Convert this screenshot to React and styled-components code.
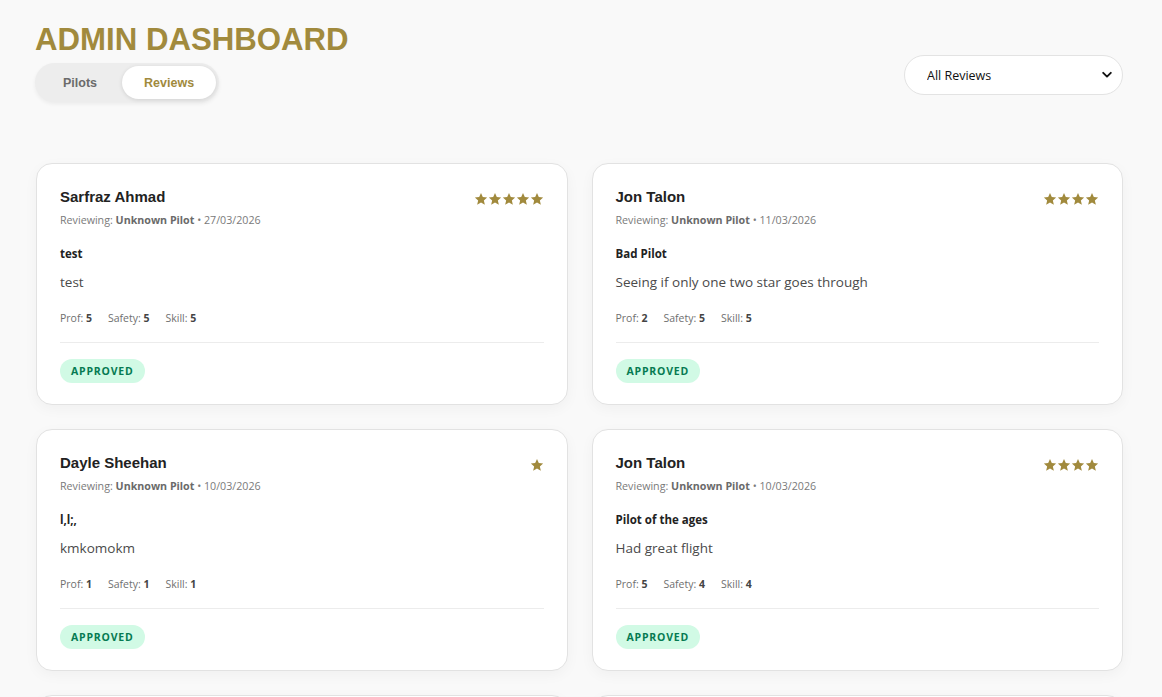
import React from "react";
import styled, { createGlobalStyle } from "styled-components";

const Global = createGlobalStyle`
  html, body { margin: 0; padding: 0; background: #f9f9f9; }
  body { font-family: "Open Sans", "Noto Sans", sans-serif; color: #222; }
  * { box-sizing: border-box; }
`;

const GOLD = "#a18a3d";

const Page = styled.div`
  padding: 22px 39px 40px 36px;
`;

const Header = styled.header`
  display: flex;
  justify-content: space-between;
  align-items: flex-start;
`;

const HeaderLeft = styled.div`
  display: flex;
  flex-direction: column;
  gap: 5px;
  margin-left: -1px;
`;

const Title = styled.h1`
  margin: 0;
  font-family: "Liberation Sans", Arial, sans-serif;
  font-weight: 700;
  font-size: 31.2px;
  line-height: 36px;
  color: ${GOLD};
`;

const Tabs = styled.div`
  display: inline-flex;
  align-self: flex-start;
  background: #ededed;
  border-radius: 999px;
  padding: 3px;
  box-shadow: 0 2px 4px rgba(0,0,0,0.06);
`;

const Tab = styled.button`
  border: none;
  background: ${(p) => (p.$active ? "#fff" : "transparent")};
  color: ${(p) => (p.$active ? GOLD : "#6b6b6b")};
  font-family: "Liberation Sans", Arial, sans-serif;
  font-weight: 700;
  font-size: 12.5px;
  height: 33px;
  padding: 0 ${(p) => (p.$active ? "22px" : "25px")};
  border-radius: 999px;
  box-shadow: ${(p) => (p.$active ? "0 1px 4px rgba(0,0,0,0.12)" : "none")};
  cursor: pointer;
`;

const SelectWrap = styled.div`
  position: relative;
  margin-top: 33px;
  width: 219px;
`;

const Select = styled.select`
  appearance: none;
  -webkit-appearance: none;
  width: 100%;
  height: 40px;
  border: 1px solid #e3e3e3;
  border-radius: 20px;
  background: #fff;
  padding: 0 30px 0 22px;
  font-family: "Open Sans", sans-serif;
  font-size: 12.5px;
  color: #111;
  outline: none;
`;

const Chevron = styled.svg`
  position: absolute;
  right: 11px;
  top: 16px;
  pointer-events: none;
`;

const Grid = styled.div`
  display: grid;
  grid-template-columns: 1fr 1fr;
  gap: 24px;
  margin-top: 61px;
`;

const Card = styled.article`
  background: #fff;
  border: 1px solid #e2e2e2;
  border-radius: 16px;
  padding: 23px 23px 21px 23px;
  box-shadow: 0 4px 14px rgba(0,0,0,0.04);
`;

const CardTop = styled.div`
  display: flex;
  justify-content: space-between;
  align-items: flex-start;
`;

const Name = styled.div`
  font-family: "Liberation Sans", Arial, sans-serif;
  font-weight: 700;
  font-size: 15px;
  line-height: 20px;
  color: #222;
`;

const Meta = styled.div`
  margin-top: 5px;
  font-size: 10.7px;
  line-height: 17px;
  color: #7a7a7a;
  b { font-weight: 700; color: #6a6a6a; }
`;

const Stars = styled.div`
  display: flex;
  margin-top: 5px;
`;

const ReviewTitle = styled.div`
  margin-top: 16px;
  font-size: 11.5px;
  line-height: 18px;
  font-weight: 700;
  color: #222;
`;

const Body = styled.p`
  margin: 8px 0 0;
  font-size: 13.5px;
  line-height: 22px;
  color: #4a4a4a;
`;

const StatsRow = styled.div`
  margin-top: 17px;
  display: flex;
  gap: 16px;
  font-size: 10.5px;
  line-height: 16px;
  color: #6f6f6f;
  b { font-weight: 700; color: #444; }
`;

const Divider = styled.hr`
  border: none;
  border-top: 1px solid #ececec;
  margin: 16px 0 15px;
`;

const Badge = styled.span`
  display: inline-flex;
  align-items: center;
  height: 24px;
  padding: 0 11px;
  border-radius: 12px;
  background: #d1fae5;
  color: #067a52;
  font-size: 10.5px;
  font-weight: 700;
  letter-spacing: 0.8px;
`;

const Star = () => (
  <svg width="14" height="14" viewBox="0 0 24 24">
    <path
      d="M12 1.8l3.1 6.9 7.4.7-5.6 5 1.7 7.4L12 17.9l-6.6 3.9 1.7-7.4-5.6-5 7.4-.7z"
      fill={GOLD}
    />
  </svg>
);

const reviews = [
  { name: "Sarfraz Ahmad", date: "27/03/2026", stars: 5, title: "test", body: "test", prof: 5, safety: 5, skill: 5 },
  { name: "Jon Talon", date: "11/03/2026", stars: 4, title: "Bad Pilot", body: "Seeing if only one two star goes through", prof: 2, safety: 5, skill: 5 },
  { name: "Dayle Sheehan", date: "10/03/2026", stars: 1, title: "l,l;,", body: "kmkomokm", prof: 1, safety: 1, skill: 1 },
  { name: "Jon Talon", date: "10/03/2026", stars: 4, title: "Pilot of the ages", body: "Had great flight", prof: 5, safety: 4, skill: 4 },
  { name: "Jon Talon", date: "09/03/2026", stars: 5, title: "Great", body: "Smooth flight", prof: 5, safety: 5, skill: 5 },
  { name: "Jon Talon", date: "09/03/2026", stars: 3, title: "Okay", body: "Fine", prof: 3, safety: 3, skill: 3 },
];

export default function App() {
  return (
    <>
      <Global />
      <Page>
        <Header>
          <HeaderLeft>
            <Title>ADMIN DASHBOARD</Title>
            <Tabs>
              <Tab>Pilots</Tab>
              <Tab $active>Reviews</Tab>
            </Tabs>
          </HeaderLeft>
          <SelectWrap>
            <Select defaultValue="all">
              <option value="all">All Reviews</option>
              <option value="pending">Pending</option>
              <option value="approved">Approved</option>
            </Select>
            <Chevron width="10" height="8" viewBox="0 0 10 8">
              <path d="M1.2 1.8L5 5.6l3.8-3.8" stroke="#111" strokeWidth="1.9" fill="none" strokeLinecap="round" strokeLinejoin="round" />
            </Chevron>
          </SelectWrap>
        </Header>
        <Grid>
          {reviews.map((r, i) => (
            <Card key={i}>
              <CardTop>
                <div>
                  <Name>{r.name}</Name>
                  <Meta>
                    Reviewing: <b>Unknown Pilot</b> • {r.date}
                  </Meta>
                </div>
                <Stars>
                  {Array.from({ length: r.stars }).map((_, j) => (
                    <Star key={j} />
                  ))}
                </Stars>
              </CardTop>
              <ReviewTitle>{r.title}</ReviewTitle>
              <Body>{r.body}</Body>
              <StatsRow>
                <span>Prof: <b>{r.prof}</b></span>
                <span>Safety: <b>{r.safety}</b></span>
                <span>Skill: <b>{r.skill}</b></span>
              </StatsRow>
              <Divider />
              <Badge>APPROVED</Badge>
            </Card>
          ))}
        </Grid>
      </Page>
    </>
  );
}
